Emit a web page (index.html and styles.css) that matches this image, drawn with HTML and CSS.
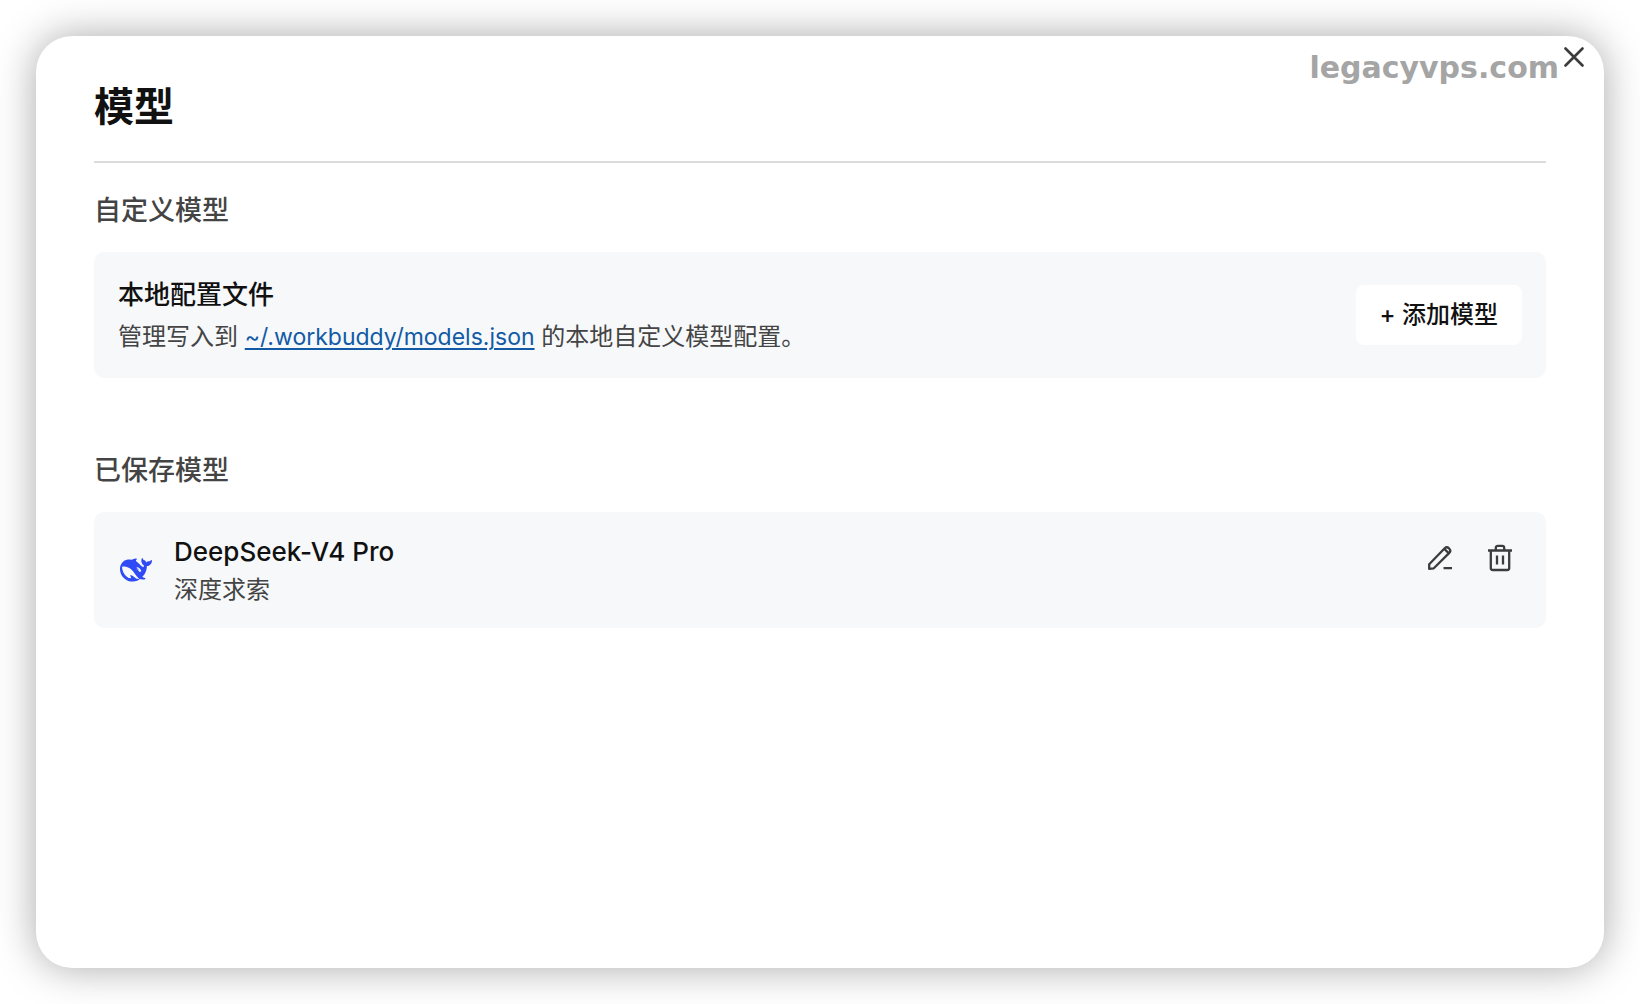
FILE: index.html
```html
<!DOCTYPE html>
<html lang="zh-CN">

<head>
    <meta charset="UTF-8">
    <meta name="viewport" content="width=device-width, initial-scale=1.0">
    <title>模型</title>
    <link rel="stylesheet" href="styles.css">
</head>

<body>
    <main class="dialog">
        <span class="site-mark">legacyvps.com</span>
        <button class="close-btn" type="button" aria-label="关闭">
            <svg width="20" height="20" viewBox="0 0 20 20" fill="none" stroke="currentColor" stroke-width="2.6" stroke-linecap="round">
                <path d="M1.500 1.500l17 17M18.500 1.500l-17 17" />
            </svg>
        </button>

        <header class="dialog-header">
            <h1>模型</h1>
        </header>

        <section class="section">
            <h2>自定义模型</h2>
            <div class="panel">
                <div class="panel-text">
                    <h3>本地配置文件</h3>
                    <p>管理写入到 <a href="#">~/.workbuddy/models.json</a> 的本地自定义模型配置。</p>
                </div>
                <button class="add-btn" type="button">+ 添加模型</button>
            </div>
        </section>

        <section class="section">
            <h2>已保存模型</h2>
            <div class="panel model">
                <svg class="model-logo" width="32" height="32" viewBox="0 0 24 24" fill="currentColor" aria-hidden="true">
                    <path d="M23.748 4.482c-.254-.124-.364.113-.512.234-.051.039-.094.09-.137.136-.372.397-.806.657-1.373.626-.829-.046-1.537.214-2.163.848-.133-.782-.575-1.248-1.247-1.548-.352-.156-.708-.311-.955-.65-.172-.241-.219-.51-.305-.774-.055-.16-.11-.323-.293-.35-.2-.031-.278.136-.356.276-.313.572-.434 1.202-.422 1.84.027 1.436.633 2.58 1.838 3.393.137.093.172.187.129.323-.082.28-.18.552-.266.833-.055.179-.137.217-.329.14a5.526 5.526 0 01-1.736-1.18c-.857-.828-1.631-1.742-2.597-2.458a11.365 11.365 0 00-.689-.471c-.985-.957.13-1.743.388-1.836.27-.098.093-.432-.779-.428-.872.004-1.67.295-2.687.684a3.055 3.055 0 01-.465.137 9.597 9.597 0 00-2.883-.102c-1.885.21-3.39 1.102-4.497 2.623C.082 8.606-.231 10.684.152 12.85c.403 2.284 1.569 4.175 3.36 5.653 1.858 1.533 3.997 2.284 6.438 2.14 1.482-.085 3.133-.284 4.994-1.86.47.234.962.327 1.78.397.63.059 1.236-.03 1.705-.128.735-.156.684-.837.419-.961-2.155-1.004-1.682-.595-2.113-.926 1.096-1.296 2.746-2.642 3.392-7.003.05-.347.007-.565 0-.845-.004-.17.035-.237.23-.256a4.173 4.173 0 001.545-.475c1.396-.763 1.96-2.015 2.093-3.517.02-.23-.004-.467-.247-.588zM11.581 18c-2.089-1.642-3.102-2.183-3.52-2.16-.392.024-.321.471-.235.763.09.288.207.486.371.739.114.167.192.416-.113.603-.673.416-1.842-.14-1.897-.167-1.361-.802-2.5-1.86-3.301-3.307-.774-1.393-1.224-2.887-1.298-4.482-.02-.386.093-.522.477-.592a4.696 4.696 0 011.529-.039c2.132.312 3.946 1.265 5.468 2.774.868.86 1.525 1.887 2.202 2.891.72 1.066 1.494 2.082 2.48 2.914.348.292.625.514.891.677-.802.09-2.14.11-3.054-.614zm1-6.44a.306.306 0 01.415-.287.302.302 0 01.2.288.306.306 0 01-.31.307.303.303 0 01-.304-.308zm3.11 1.596c-.2.081-.399.151-.59.16a1.245 1.245 0 01-.798-.254c-.274-.23-.47-.358-.552-.758a1.73 1.73 0 01.016-.588c.07-.327-.008-.537-.239-.727-.187-.156-.426-.199-.688-.199a.559.559 0 01-.254-.078c-.11-.054-.2-.19-.114-.358.028-.054.16-.186.192-.21.356-.202.767-.136 1.146.016.352.144.618.408 1.001.782.391.451.462.576.685.914.176.265.336.537.445.848.067.195-.019.354-.25.452z" />
                </svg>
                <div class="panel-text">
                    <h3>DeepSeek-V4 Pro</h3>
                    <p>深度求索</p>
                </div>
                <div class="actions">
                    <button class="icon-btn" type="button" aria-label="编辑">
                        <svg width="28" height="28" viewBox="0 0 28 28" fill="none" stroke="currentColor" stroke-width="2.3" stroke-linejoin="round">
                            <path d="M3.200 24.800v-4.600L18.700 4.300a3 3 0 0 1 4.200 0l.4.400a3 3 0 0 1 0 4.200L7.800 24.300 3.200 24.800z" />
                            <path d="M18.200 4.800l4.700 4.600M17.500 24.200H26" />
                        </svg>
                    </button>
                    <button class="icon-btn" type="button" aria-label="删除">
                        <svg width="28" height="28" viewBox="0 0 28 28" fill="none" stroke="currentColor" stroke-width="2.3" stroke-linejoin="round">
                            <path d="M2 6.500h24M9.800 6.500V3.800a2 2 0 0 1 2-2h4.400a2 2 0 0 1 2 2v2.700M4.800 6.500V24a2 2 0 0 0 2 2h14.400a2 2 0 0 0 2-2V6.500M11 11.500v9M17 11.500v9" />
                        </svg>
                    </button>
                </div>
            </div>
        </section>
    </main>
</body>

</html>
```
FILE: styles.css
```css
* {
    margin: 0;
    padding: 0;
    box-sizing: border-box;
}

body {
    font-family: Inter, "Noto Sans CJK SC", sans-serif;
    background: #fff;
    color: #111;
    min-height: 100vh;
    padding: 36px;
    display: flex;
}

button {
    font: inherit;
    border: none;
    background: none;
    cursor: pointer;
}

svg {
    display: block;
}

.dialog {
    position: relative;
    flex: 1;
    padding: 42px 58px;
    border-radius: 36px;
    background: #fff;
    box-shadow: 0 0 40px rgba(0, 0, 0, 0.34);
}

.site-mark {
    position: absolute;
    top: 14px;
    right: 45px;
    font: bold 30px/36px "DejaVu Sans", sans-serif;
    color: #a5a5a5;
}

.close-btn {
    position: absolute;
    top: 11px;
    right: 20px;
    color: #3c3c3c;
}

.dialog-header {
    padding-bottom: 25px;
    border-bottom: 2px solid #dcdcdc;
}

h1 {
    font-size: 40px;
    line-height: 58px;
    font-weight: 600;
}

.section {
    margin-bottom: 72px;
}

h2 {
    padding: 28px 0 21px;
    font-size: 27px;
    line-height: 40px;
    font-weight: 500;
    color: #444;
}

.section + .section h2 {
    padding-top: 1px;
}

.panel {
    display: flex;
    align-items: center;
    justify-content: space-between;
    padding: 23px 24px;
    border-radius: 10px;
    background: #f6f8fa;
}

.panel-text {
    display: flex;
    flex-direction: column;
    gap: 4px;
}

h3 {
    font-size: 26px;
    line-height: 40px;
    font-weight: 500;
}

.panel p {
    font-size: 24px;
    line-height: 36px;
    color: #444;
}

.panel a {
    font-size: 23px;
    color: #125aa6;
    text-decoration-thickness: 2px;
    text-underline-offset: 3px;
}

.add-btn {
    padding: 12px 24px;
    border-radius: 8px;
    background: #fff;
    color: #111;
    font-size: 24px;
    line-height: 36px;
    font-weight: 500;
}

.model {
    padding: 20px 32px 20px 26px;
    gap: 22px;
}

.model .panel-text {
    flex: 1;
    gap: 0;
}

.model-logo {
    color: #2f4bf5;
}

.actions {
    display: flex;
    align-self: flex-start;
    gap: 32px;
    padding-top: 12px;
}

.icon-btn {
    color: #3c3c3c;
}
```
